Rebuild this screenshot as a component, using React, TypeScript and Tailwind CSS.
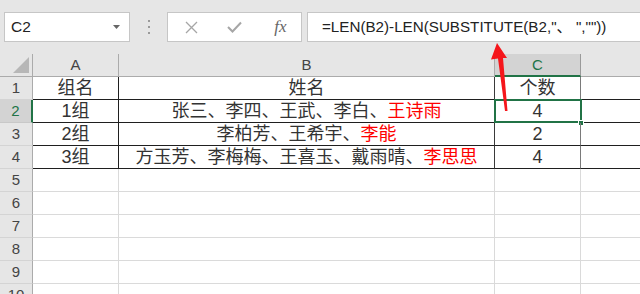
import React from "react";

const FONT = { fontFamily: '"Liberation Sans", "Noto Sans CJK SC", sans-serif' };

type Cell = { a: string; b: React.ReactNode; c: string };

const ROWS: Cell[] = [
  { a: "组名", b: "姓名", c: "个数" },
  {
    a: "1组",
    b: (
      <>
        张三、李四、王武、李白、<span className="text-[#ff0000]">王诗雨</span>
      </>
    ),
    c: "4",
  },
  {
    a: "2组",
    b: (
      <>
        李柏芳、王希宇、<span className="text-[#ff0000]">李能</span>
      </>
    ),
    c: "2",
  },
  {
    a: "3组",
    b: (
      <>
        方玉芳、李梅梅、王喜玉、戴雨晴、<span className="text-[#ff0000]">李思思</span>
      </>
    ),
    c: "4",
  },
];

const EMPTY_ROWS = [5, 6, 7, 8, 9, 10];

function Toolbar() {
  return (
    <div className="flex h-[54px] items-start bg-[#e6e6e6] pt-[12px]">
      {/* Name box */}
      <div className="ml-[4px] flex h-[30px] w-[126px] items-center justify-between border border-[#c6c6c6] bg-white pl-[6px] pr-[9px]">
        <span className="text-[15.5px] text-[#222]">C2</span>
        <svg width="7" height="4" viewBox="0 0 7 4">
          <path d="M0 0 L7 0 L3.5 4 Z" fill="#666" />
        </svg>
      </div>

      {/* Separator dots */}
      <div className="flex h-[30px] w-[37px] flex-col items-center justify-center gap-[4px]">
        <span className="h-[2px] w-[2px] bg-[#9a9a9a]" />
        <span className="h-[2px] w-[2px] bg-[#9a9a9a]" />
        <span className="h-[2px] w-[2px] bg-[#9a9a9a]" />
      </div>

      {/* Cancel / enter / fx */}
      <div className="flex h-[30px] w-[135px] items-center border border-[#c6c6c6] bg-white">
        <div className="flex w-[45px] justify-center pl-[2px]">
          <svg width="13" height="13" viewBox="0 0 13 13">
            <path d="M1 1 L12 12 M12 1 L1 12" stroke="#a6a6a6" strokeWidth="1.3" />
          </svg>
        </div>
        <div className="flex w-[45px] justify-center">
          <svg width="15" height="12" viewBox="0 0 15 12">
            <path d="M1 6 L5.5 10.5 L14 1.5" stroke="#a6a6a6" strokeWidth="2" fill="none" />
          </svg>
        </div>
        <div className="flex w-[45px] justify-center pl-[3px]">
          <span
            className="text-[17px] italic text-[#666]"
            style={{ fontFamily: '"Liberation Serif", serif' }}
          >
            fx
          </span>
        </div>
      </div>

      {/* Formula input */}
      <div className="ml-[5px] flex h-[30px] flex-1 items-center border-y border-l border-[#c6c6c6] bg-white pl-[14px]">
        <span className="whitespace-pre text-[15.2px] text-[#222]">=LEN(B2)-LEN(SUBSTITUTE(B2,"、 ",""))</span>
      </div>
    </div>
  );
}

function Corner() {
  return (
    <div className="flex h-[23px] items-end justify-end border-b border-r border-[#ababab] bg-[#e6e6e6] pb-[3px] pr-[3px]">
      <svg width="16" height="16" viewBox="0 0 16 16">
        <path d="M16 0 L16 16 L0 16 Z" fill="#b7b7b7" />
      </svg>
    </div>
  );
}

export default function App() {
  const rowBorder = "border-b border-[#1f1f1f]";
  const gridLine = "border-b border-[#dadada]";

  return (
    <div className="relative h-[294px] w-[640px] overflow-hidden bg-white" style={FONT}>
      <Toolbar />

      <div className="grid grid-cols-[33px_86px_376px_86px_1fr] auto-rows-[23px] text-[#333]">
        {/* Column headers */}
        <Corner />
        <div className="flex items-center justify-center border-b border-r border-[#ababab] bg-[#e6e6e6] text-[15px] text-[#444]">A</div>
        <div className="flex items-center justify-center border-b border-r border-[#ababab] bg-[#e6e6e6] text-[15px] text-[#444]">B</div>
        <div className="flex items-center justify-center border-b-2 border-r border-b-[#217346] border-r-[#9a9a9a] bg-[#d3d3d3] pt-[1px] text-[15px] text-[#217346]">C</div>
        <div className="border-b border-[#ababab] bg-[#e6e6e6]" />

        {/* Data rows */}
        {ROWS.map((r, i) => {
          const n = i + 1;
          const sel = n === 2;
          return (
            <React.Fragment key={n}>
              <div
                className={`flex items-center justify-center border-b text-[15px] ${
                  sel
                    ? "border-b-[#c8c8c8] border-r-2 border-r-[#217346] bg-[#d3d3d3] text-[#217346]"
                    : "border-r border-b-[#d4d4d4] border-r-[#ababab] bg-[#e6e6e6] text-[#444]"
                }`}
              >
                {n}
              </div>
              <div className={`flex items-center justify-center border-r border-r-[#1f1f1f] text-[18px] leading-[22px] ${rowBorder}`}>
                {r.a}
              </div>
              <div className={`flex items-center justify-center border-r border-r-[#3a3a3a] text-[18px] leading-[22px] ${rowBorder}`}>
                {r.b}
              </div>
              <div className={`relative flex items-center justify-center border-r border-r-[#7a7a7a] text-[18px] leading-[22px] ${rowBorder}`}>
                {r.c}
                {sel && (
                  <>
                    <div className="pointer-events-none absolute -left-[1px] -top-[1px] h-[24px] w-[88px] border-2 border-[#217346]" />
                    <div className="absolute -bottom-[4px] -right-[4px] h-[6px] w-[6px] border border-white bg-[#217346]" />
                  </>
                )}
              </div>
              <div className={rowBorder} />
            </React.Fragment>
          );
        })}

        {/* Empty rows */}
        {EMPTY_ROWS.map(n => (
          <React.Fragment key={n}>
            <div className="flex items-center justify-center border-b border-r border-b-[#d4d4d4] border-r-[#ababab] bg-[#e6e6e6] text-[15px] text-[#444]">
              {n}
            </div>
            <div className={`border-r border-r-[#dadada] ${gridLine}`} />
            <div className={`border-r border-r-[#dadada] ${gridLine}`} />
            <div className={`border-r border-r-[#dadada] ${gridLine}`} />
            <div className={gridLine} />
          </React.Fragment>
        ))}
      </div>

      {/* Red annotation arrow */}
      <svg className="pointer-events-none absolute left-0 top-0" width="640" height="294" viewBox="0 0 640 294">
        <path d="M497 43 L507 58 L503 58 L507.5 111 L505 111 L498 58.5 L491 59.5 Z" fill="#f5161b" />
      </svg>
    </div>
  );
}
